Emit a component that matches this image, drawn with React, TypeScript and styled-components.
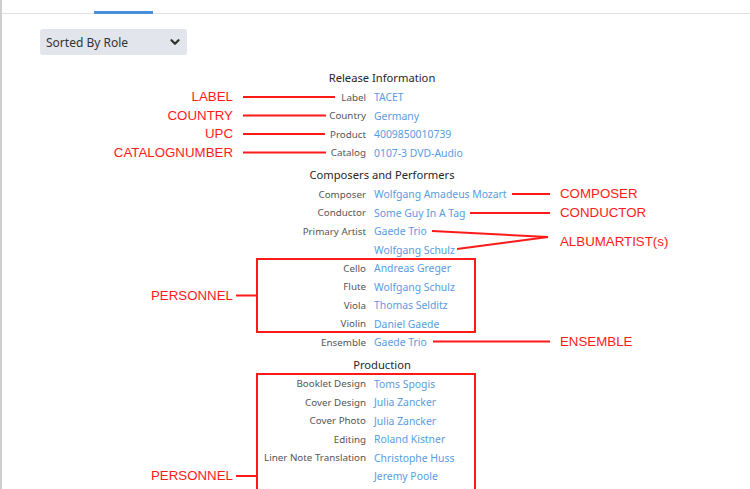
import React from "react";
import styled, { createGlobalStyle } from "styled-components";

const Global = createGlobalStyle`
  html, body { margin: 0; padding: 0; background: #fff; }
  body { font-family: "Noto Sans", "Open Sans", sans-serif; overflow: hidden; }
`;

const Page = styled.div`
  position: relative;
  width: 750px;
  height: 489px;
  box-sizing: border-box;
  border-left: 2px solid #cfcfcf;
  overflow: hidden;
`;

const TabBar = styled.div`
  height: 13px;
  border-bottom: 1px solid #e3e3e3;
  display: flex;
  align-items: flex-end;
  padding-left: 92px;
`;

const ActiveTab = styled.div`
  width: 59px;
  height: 3px;
  margin-bottom: -1px;
  background: #4a8fdb;
`;

const Toolbar = styled.div`
  padding: 15px 0 0 38px;
`;

const Select = styled.div`
  width: 147px;
  height: 26px;
  box-sizing: border-box;
  background: #e2e5eb;
  border-radius: 3px;
  display: flex;
  align-items: center;
  justify-content: space-between;
  padding: 0 6px;
  font-size: 12px;
  color: #333;
`;

const Content = styled.div`
  padding-top: 13px;
  display: flex;
  flex-direction: column;
  gap: 3px;
`;

const Section = styled.section`
  display: flex;
  flex-direction: column;
`;

const Heading = styled.h3`
  margin: 0 0 0 12px;
  height: 20px;
  line-height: 20px;
  text-align: center;
  font-size: 11.2px;
  font-weight: 400;
  color: #262626;
`;

const Rows = styled.div`
  display: grid;
  grid-template-columns: 231px 133px 194px 1fr;
  grid-auto-rows: 18.5px;
  align-items: center;
`;

const Key = styled.div<{ $row: number }>`
  grid-column: 2;
  grid-row: ${(p) => p.$row};
  text-align: right;
  font-size: 9.8px;
  color: #555;
  white-space: nowrap;
`;

const Value = styled.div<{ $row: number }>`
  grid-column: 3;
  grid-row: ${(p) => p.$row};
  padding-left: 8px;
  font-size: 10.4px;
  color: #5a9be2;
  white-space: nowrap;
`;

const Note = styled.div<{ $side: "left" | "right"; $row: number; $span: number }>`
  grid-column: ${(p) => (p.$side === "left" ? 1 : 4)};
  grid-row: ${(p) => p.$row} / span ${(p) => p.$span};
  text-align: ${(p) => (p.$side === "left" ? "right" : "left")};
  padding-top: ${(p) => (p.$span === 2 ? 3 : 0)}px;
  font-family: "Liberation Sans", Arial, sans-serif;
  font-size: 13.3px;
  line-height: 16px;
  color: #ff1a1a;
  white-space: nowrap;
`;

const Marks = styled.svg`
  position: absolute;
  left: -2px;
  top: 0;
  pointer-events: none;
`;

type NoteDef = { text: string; side: "left" | "right"; row: number; span?: number };
type SectionDef = { title: string; rows: [string, string][]; notes: NoteDef[] };

const sections: SectionDef[] = [
  {
    title: "Release Information",
    rows: [
      ["Label", "TACET"],
      ["Country", "Germany"],
      ["Product", "4009850010739"],
      ["Catalog", "0107-3 DVD-Audio"],
    ],
    notes: [
      { text: "LABEL", side: "left", row: 1 },
      { text: "COUNTRY", side: "left", row: 2 },
      { text: "UPC", side: "left", row: 3 },
      { text: "CATALOGNUMBER", side: "left", row: 4 },
    ],
  },
  {
    title: "Composers and Performers",
    rows: [
      ["Composer", "Wolfgang Amadeus Mozart"],
      ["Conductor", "Some Guy In A Tag"],
      ["Primary Artist", "Gaede Trio"],
      ["", "Wolfgang Schulz"],
      ["Cello", "Andreas Greger"],
      ["Flute", "Wolfgang Schulz"],
      ["Viola", "Thomas Selditz"],
      ["Violin", "Daniel Gaede"],
      ["Ensemble", "Gaede Trio"],
    ],
    notes: [
      { text: "COMPOSER", side: "right", row: 1 },
      { text: "CONDUCTOR", side: "right", row: 2 },
      { text: "ALBUMARTIST(s)", side: "right", row: 3, span: 2 },
      { text: "PERSONNEL", side: "left", row: 5, span: 4 },
      { text: "ENSEMBLE", side: "right", row: 9 },
    ],
  },
  {
    title: "Production",
    rows: [
      ["Booklet Design", "Toms Spogis"],
      ["Cover Design", "Julia Zancker"],
      ["Cover Photo", "Julia Zancker"],
      ["Editing", "Roland Kistner"],
      ["Liner Note Translation", "Christophe Huss"],
      ["", "Jeremy Poole"],
      ["", ""],
    ],
    notes: [{ text: "PERSONNEL", side: "left", row: 6 }],
  },
];

const Chevron = () => (
  <svg width="12" height="12" viewBox="0 0 12 12">
    <path d="M2.5 4.2 L6 7.7 L9.5 4.2" fill="none" stroke="#333" strokeWidth="2.3" strokeLinecap="round" strokeLinejoin="round" />
  </svg>
);

const red = "#ff1a1a";

export default function App() {
  return (
    <>
      <Global />
      <Page>
        <TabBar>
          <ActiveTab />
        </TabBar>
        <Toolbar>
          <Select>
            <span>Sorted By Role</span>
            <Chevron />
          </Select>
        </Toolbar>
        <Content>
          {sections.map((s) => (
            <Section key={s.title}>
              <Heading>{s.title}</Heading>
              <Rows>
                {s.rows.map(([k, v], i) => (
                  <React.Fragment key={i}>
                    <Key $row={i + 1}>{k}</Key>
                    <Value $row={i + 1}>{v}</Value>
                  </React.Fragment>
                ))}
                {s.notes.map((n) => (
                  <Note key={n.text + n.row} $side={n.side} $row={n.row} $span={n.span ?? 1}>
                    {n.text}
                  </Note>
                ))}
              </Rows>
            </Section>
          ))}
        </Content>
        <Marks width="750" height="489" viewBox="0 0 750 489">
          <g stroke={red} strokeWidth="2" fill="none">
            <line x1="243" y1="97" x2="335" y2="97" />
            <line x1="243" y1="115.5" x2="326" y2="115.5" />
            <line x1="243" y1="134" x2="325" y2="134" />
            <line x1="243" y1="152.5" x2="326" y2="152.5" />
            <line x1="512" y1="194" x2="550" y2="194" />
            <line x1="470" y1="213" x2="550" y2="213" />
            <line x1="432" y1="231" x2="548" y2="237" />
            <line x1="457" y1="249" x2="548" y2="237" />
            <rect x="257" y="259" width="218" height="73" />
            <line x1="236" y1="295.5" x2="257" y2="295.5" />
            <line x1="433" y1="341.5" x2="550" y2="341.5" />
            <rect x="257" y="374" width="218" height="130" />
            <line x1="236" y1="476" x2="257" y2="476" />
          </g>
        </Marks>
      </Page>
    </>
  );
}
